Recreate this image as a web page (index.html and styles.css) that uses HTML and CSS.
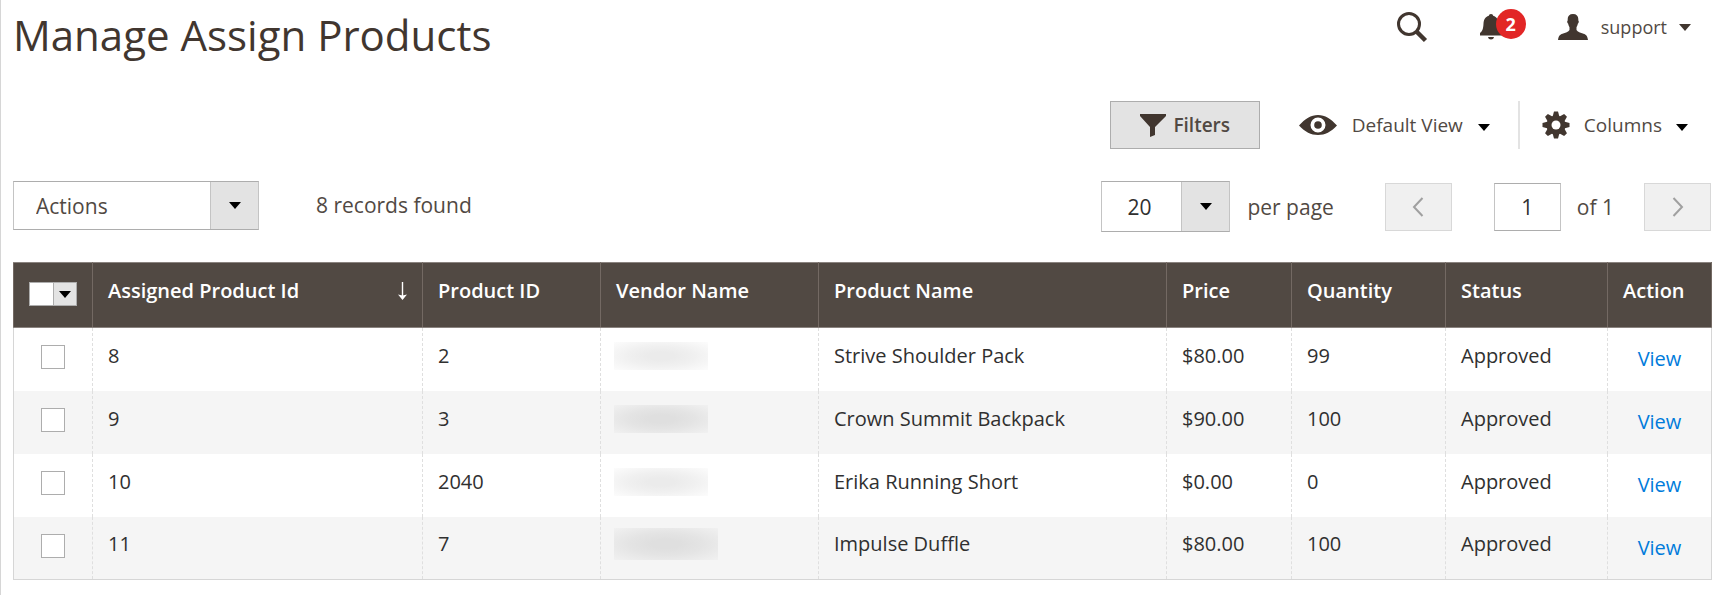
FILE: index.html
```html
<!DOCTYPE html>
<html lang="en">

<head>
    <meta charset="UTF-8">
    <meta name="viewport" content="width=device-width, initial-scale=1.0">
    <title>Manage Assign Products</title>
    <link rel="stylesheet" href="styles.css">
</head>

<body>
    <header class="page-header">
        <h1 class="page-title">Manage Assign Products</h1>
        <div class="header-tools">
            <button class="tool search" aria-label="Search">
                <svg width="32" height="32" viewBox="0 0 32 32">
                    <circle cx="13" cy="13" r="10.5" fill="none" stroke="#41362f" stroke-width="3" />
                    <path d="M20.5 20.5L29.5 29.5" stroke="#41362f" stroke-width="4.5" />
                </svg>
            </button>
            <button class="tool bell" aria-label="Notifications">
                <svg width="22" height="26" viewBox="0 0 22 26">
                    <path fill="#41362f" d="M11 0c1.500 0 2 1 2.200 1.800C17 3 18.300 6 18.500 9.500c.2 5 1 7.500 3.500 9.500v2.500H0V19c2.500-2 3.300-4.500 3.500-9.500C3.700 6 5 3 8.800 1.800 9 1 9.500 0 11 0zM8 23h6c-.5 1.800-1.500 2.500-3 2.500S8.500 24.800 8 23z" />
                </svg>
                <span class="badge">2</span>
            </button>
            <button class="tool user">
                <svg width="30" height="26" viewBox="0 0 30 26">
                    <path fill="#41362f" d="M15 0c3.500 0 5.300 2 5.300 5v1.500c.8.3.6 2.500-.5 3.300-.3 1.700-.8 2.700-1.300 3.400V16c1 2 4 2.700 7 3.700 2.500.8 3.800 1.800 4.500 6.300H0c.7-4.500 2-5.500 4.500-6.300 3-1 6-1.700 7-3.700v-2.800c-.5-.7-1-1.700-1.300-3.400-1.100-.8-1.300-3-.5-3.300V5c0-3 1.800-5 5.300-5z" />
                </svg>
                <span>support</span>
                <i class="caret brown"></i>
            </button>
        </div>
    </header>

    <div class="grid-controls">
        <button class="filters">
            <svg width="28" height="23" viewBox="0 0 28 23">
                <path fill="#41362f" d="M1 0h26v2L16 13v8l-5 2V13L1 2z" />
            </svg>
            <span>Filters</span>
        </button>
        <button class="control view">
            <svg width="38" height="20" viewBox="0 0 38 20">
                <path fill="#41362f" fill-rule="evenodd" d="M0 10.500C6 4 12 0 19 0s13 4 19 10.500C32 17 26 20 19 20S6 17 0 10.500zM19 2.500a7.500 7.500 0 1 0 0 15 7.500 7.500 0 0 0 0-15z" />
                <circle cx="19" cy="10" r="3.800" fill="#41362f" />
            </svg>
            <span>Default View</span>
            <i class="caret"></i>
        </button>
        <button class="control columns">
            <svg width="28" height="28" viewBox="-14 -14 28 28">
                <g fill="#41362f">
                    <path id="tooth" d="M-3.500-8L-2-13.500h4L3.500-8v16L2 13.500h-4L-3.500 8z" />
                    <use href="#tooth" transform="rotate(45)" />
                    <use href="#tooth" transform="rotate(90)" />
                    <use href="#tooth" transform="rotate(135)" />
                    <circle r="9.500" />
                </g>
                <circle r="4.500" fill="#fff" />
            </svg>
            <span>Columns</span>
            <i class="caret"></i>
        </button>
    </div>

    <div class="grid-toolbar">
        <div class="select-box actions">
            <select aria-label="Actions">
                <option>Actions</option>
            </select>
            <span class="arrow"><i class="caret"></i></span>
        </div>
        <span class="records">8 records found</span>
        <div class="pager">
            <div class="select-box per-page">
                <select id="per-page">
                    <option>20</option>
                </select>
                <span class="arrow"><i class="caret"></i></span>
            </div>
            <label class="per-page-label" for="per-page">per page</label>
            <button class="page-btn" aria-label="Previous page" disabled>
                <svg width="12" height="20" viewBox="0 0 12 20">
                    <path d="M10.500 1L2 10l8.500 9" fill="none" stroke="#a0a0a0" stroke-width="2" />
                </svg>
            </button>
            <input class="page-input" id="page" type="text" value="1">
            <label class="page-total" for="page">of 1</label>
            <button class="page-btn" aria-label="Next page" disabled>
                <svg width="12" height="20" viewBox="0 0 12 20">
                    <path d="M1.500 1L10 10l-8.500 9" fill="none" stroke="#a0a0a0" stroke-width="2" />
                </svg>
            </button>
        </div>
    </div>

    <table class="data-grid">
        <thead>
            <tr>
                <th class="col-check">
                    <div class="multicheck">
                        <input type="checkbox" aria-label="Select all">
                        <button aria-label="Selection options"><i class="caret"></i></button>
                    </div>
                </th>
                <th class="col-id">
                    <div class="sorted">
                        <span>Assigned Product Id</span>
                        <svg width="9" height="18" viewBox="0 0 9 18">
                            <path d="M4.500 0v15" stroke="#fff" stroke-width="1.400" />
                            <path d="M0 12.500l4.500 1 4.500-1L4.500 18z" fill="#fff" />
                        </svg>
                    </div>
                </th>
                <th class="col-product-id">Product ID</th>
                <th class="col-vendor">Vendor Name</th>
                <th class="col-name">Product Name</th>
                <th class="col-price">Price</th>
                <th class="col-qty">Quantity</th>
                <th class="col-status">Status</th>
                <th class="col-action">Action</th>
            </tr>
        </thead>
        <tbody>
            <tr>
                <td class="check"><input type="checkbox" aria-label="Select 8"></td>
                <td>8</td>
                <td>2</td>
                <td class="vendor"><span class="hidden-name"></span></td>
                <td>Strive Shoulder Pack</td>
                <td>$80.00</td>
                <td>99</td>
                <td>Approved</td>
                <td class="action"><a href="#">View</a></td>
            </tr>
            <tr>
                <td class="check"><input type="checkbox" aria-label="Select 9"></td>
                <td>9</td>
                <td>3</td>
                <td class="vendor"><span class="hidden-name dark"></span></td>
                <td>Crown Summit Backpack</td>
                <td>$90.00</td>
                <td>100</td>
                <td>Approved</td>
                <td class="action"><a href="#">View</a></td>
            </tr>
            <tr>
                <td class="check"><input type="checkbox" aria-label="Select 10"></td>
                <td>10</td>
                <td>2040</td>
                <td class="vendor"><span class="hidden-name"></span></td>
                <td>Erika Running Short</td>
                <td>$0.00</td>
                <td>0</td>
                <td>Approved</td>
                <td class="action"><a href="#">View</a></td>
            </tr>
            <tr>
                <td class="check"><input type="checkbox" aria-label="Select 11"></td>
                <td>11</td>
                <td>7</td>
                <td class="vendor"><span class="hidden-name dark wide"></span></td>
                <td>Impulse Duffle</td>
                <td>$80.00</td>
                <td>100</td>
                <td>Approved</td>
                <td class="action"><a href="#">View</a></td>
            </tr>
        </tbody>
    </table>
</body>

</html>
```
FILE: styles.css
```css
* {
    box-sizing: border-box;
}

body {
    margin: 0;
    padding: 11px 21px 0 12px;
    min-height: 100vh;
    border-left: 1px solid #d6d6d6;
    background-color: white;
    color: #41362f;
    font-family: 'Open Sans', sans-serif;
    font-size: 20px;
    line-height: 28px;
}

button,
input,
select {
    margin: 0;
    font: inherit;
    color: inherit;
}

button {
    padding: 0;
    border: none;
    background: none;
    cursor: pointer;
}

svg {
    display: block;
    flex: none;
}

.caret {
    flex: none;
    border: 6px solid transparent;
    border-top: 7px solid black;
    border-bottom: none;
}

.caret.brown {
    border-top-color: #41362f;
}

.page-header {
    display: flex;
    justify-content: space-between;
    align-items: flex-start;
    height: 90px;
}

.page-title {
    margin: 0;
    font-size: 42px;
    font-weight: 400;
    line-height: 48px;
}

.header-tools {
    display: flex;
    align-items: center;
    height: 32px;
    padding-right: 20px;
}

.tool {
    display: flex;
    align-items: center;
}

.search {
    margin-right: 52px;
}

.bell {
    position: relative;
    margin-right: 56px;
}

.badge {
    position: absolute;
    top: -5px;
    left: 16px;
    width: 30px;
    height: 30px;
    border-radius: 50%;
    background-color: #e22626;
    color: white;
    font-size: 18px;
    font-weight: 700;
    line-height: 30px;
    text-align: center;
}

.user {
    color: #514943;
    font-size: 18px;
}

.user span {
    margin: 0 12px 0 13px;
}

.grid-controls {
    display: flex;
    justify-content: flex-end;
    height: 48px;
    color: #514943;
    font-size: 19px;
}

.filters {
    display: flex;
    align-items: center;
    justify-content: center;
    gap: 6px;
    width: 150px;
    border: 1px solid #adadad;
    background-color: #e3e3e3;
    font-weight: 600;
}

.control {
    display: flex;
    align-items: center;
}

.control .caret {
    margin-top: 4px;
}

.view {
    padding: 0 28px 0 39px;
}

.view span {
    margin: 0 15px;
}

.columns {
    padding: 0 23px 0 22px;
    border-left: 2px solid #e3e3e3;
}

.columns span {
    margin: 0 14px;
}

.grid-toolbar {
    display: flex;
    align-items: flex-start;
    margin: 32px 0 30px;
    color: #514943;
    font-size: 21px;
}

.select-box {
    display: flex;
    border: 1px solid #adadad;
    border-left-color: #c4c4c4;
    border-right-color: #c4c4c4;
}

.select-box select {
    flex: 1;
    min-width: 0;
    appearance: none;
    border: none;
    background-color: white;
    outline: none;
}

.arrow {
    display: flex;
    align-items: center;
    justify-content: center;
    width: 48px;
    border-left: 1px solid #c4c4c4;
    background-color: #e3e3e3;
}

.actions {
    width: 246px;
    height: 49px;
}

.actions select {
    padding: 0 22px;
}

.per-page {
    width: 129px;
    height: 51px;
    color: #303030;
}

.per-page select {
    padding: 0 25px;
}

.records {
    margin-left: 57px;
    line-height: 49px;
}

.pager {
    display: flex;
    align-items: center;
    margin-left: auto;
}

.per-page-label {
    margin: 0 51px 0 17px;
}

.page-btn {
    display: flex;
    align-items: center;
    justify-content: center;
    width: 67px;
    height: 48px;
    border: 1px solid #d8d8d8;
    background-color: #f0f0f0;
}

.page-input {
    width: 67px;
    height: 48px;
    margin-left: 42px;
    border: 1px solid #adadad;
    border-left-color: #c4c4c4;
    border-right-color: #c4c4c4;
    color: #303030;
    text-align: center;
}

.page-total {
    margin: 0 30px 0 16px;
}

.data-grid {
    width: 100%;
    table-layout: fixed;
    border-collapse: collapse;
    border: 1px solid #d6d6d6;
    color: #303030;
}

.data-grid th {
    height: 65px;
    padding: 0 15px 8px;
    border: 1px solid #8a837f;
    border-left-color: #736963;
    border-right-color: #736963;
    background-color: #514943;
    color: white;
    font-weight: 600;
    text-align: left;
}

.data-grid td {
    height: 63px;
    padding: 0 15px 7px;
    border-left: 1px dashed #dfdfdf;
}

.data-grid td:first-child {
    border-left: 1px solid #d6d6d6;
}

.data-grid tbody tr:nth-child(even) {
    background-color: #f5f5f5;
}

.data-grid .action {
    padding: 0;
    text-align: center;
}

.data-grid .check {
    padding: 0 0 4px;
}

.data-grid .col-check {
    width: 79px;
    padding: 0 0 2px;
}

.col-id {
    width: 330px;
}

.col-product-id {
    width: 178px;
}

.col-vendor {
    width: 218px;
}

.col-name {
    width: 348px;
}

.col-price {
    width: 125px;
}

.col-qty {
    width: 154px;
}

.col-status {
    width: 162px;
}

.col-action {
    width: 104px;
}

.sorted {
    display: flex;
    justify-content: space-between;
    align-items: center;
}

.data-grid input {
    display: block;
    width: 24px;
    height: 24px;
    margin: 0 auto;
    appearance: none;
    border: 1px solid #adadad;
    background-color: white;
}

.multicheck {
    display: flex;
    justify-content: center;
}

.multicheck input,
.data-grid .multicheck input {
    margin: 0;
    border-right: none;
}

.multicheck button {
    display: flex;
    align-items: center;
    justify-content: center;
    width: 24px;
    height: 24px;
    border: 1px solid #adadad;
    background-color: #e3e3e3;
}

.data-grid .vendor {
    padding-left: 13px;
}

/* vendor names are masked */
.hidden-name {
    display: block;
    width: 94px;
    height: 28px;
    background: radial-gradient(ellipse, #ebebeb 20%, #f0f0f0 50%, #fcfcfc 100%);
}

.hidden-name.dark {
    background: radial-gradient(ellipse, #dfdfdf 20%, #e4e4e4 50%, #f1f1f1 100%);
}

.hidden-name.wide {
    width: 104px;
    height: 32px;
}

.action a {
    color: #007bdb;
    text-decoration: none;
}
```
